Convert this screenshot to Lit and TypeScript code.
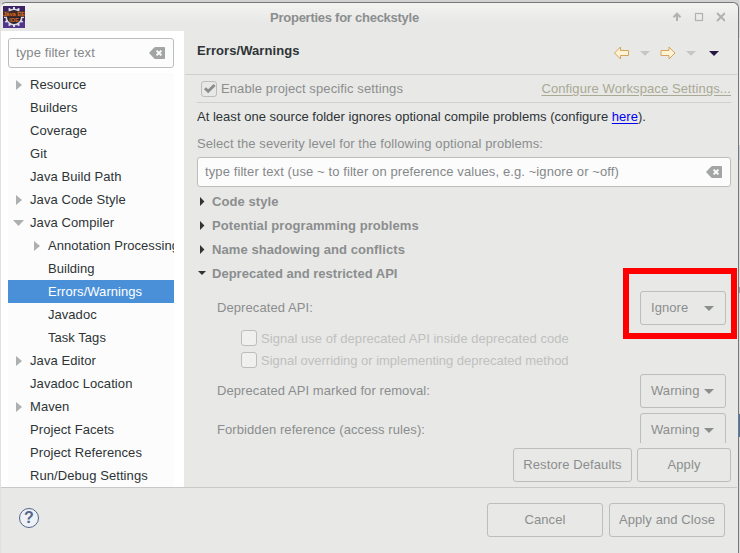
import { LitElement, html, css, svg } from "lit";
import { customElement } from "lit/decorators.js";
import { classMap } from "lit/directives/class-map.js";

type Node = { label: string; depth?: number; state?: "open" | "closed"; selected?: boolean };

const TREE: Node[] = [
  { label: "Resource", state: "closed" },
  { label: "Builders" },
  { label: "Coverage" },
  { label: "Git" },
  { label: "Java Build Path" },
  { label: "Java Code Style", state: "closed" },
  { label: "Java Compiler", state: "open" },
  { label: "Annotation Processing", depth: 1, state: "closed" },
  { label: "Building", depth: 1 },
  { label: "Errors/Warnings", depth: 1, selected: true },
  { label: "Javadoc", depth: 1 },
  { label: "Task Tags", depth: 1 },
  { label: "Java Editor", state: "closed" },
  { label: "Javadoc Location" },
  { label: "Maven", state: "closed" },
  { label: "Project Facets" },
  { label: "Project References" },
  { label: "Run/Debug Settings" },
];

const SECTIONS = ["Code style", "Potential programming problems", "Name shadowing and conflicts"];

const clearIcon = html`<svg class="clear" width="16" height="12" viewBox="0 0 16 12">
  <path d="M0 6 5.2 0.6Q5.8 0 6.6 0H15.2Q16 0 16 .8V11.2Q16 12 15.2 12H6.6Q5.8 12 5.2 11.4Z" fill="#a3a5a5"/>
  <path d="M7.6 3.6 12.4 8.4M12.4 3.6 7.6 8.4" stroke="#fcfcfc" stroke-width="2"/>
</svg>`;

const dropIcon = html`<svg class="drop" width="10" height="5" viewBox="0 0 10 5"><path d="M0 0H10L5 5Z" fill="#8b8e8f"/></svg>`;

const teeth = Array.from({ length: 12 }, (_, i) => svg`<rect x="10" y="1" width="2" height="3" fill="#dcdce4" transform=${`rotate(${i * 30} 11 11)`}/>`);

@customElement("app-root")
export class AppRoot extends LitElement {
  static styles = css`
    :host { display: block; width: 740px; height: 553px; position: relative; overflow: hidden; background: #d2d2d2;
      font: 13px/17px "Liberation Sans", Arial, sans-serif; letter-spacing: .08px; color: #2e3436; white-space: nowrap; }
    * { box-sizing: border-box; }
    svg { display: block; flex: none; }
    .behind { position: absolute; left: 739px; top: 0; width: 1px; height: 553px; background: #dcdcdc; }
    .behind i { position: absolute; left: 0; width: 1px; }
    .i1 { top: 38px; height: 107px; background: #ececec; }
    .i2 { top: 145px; height: 15px; background: #c5d0dc; }
    .i3 { top: 287px; height: 6px; background: #999; }
    .i4 { top: 414px; height: 23px; background: #4079b0; }
    .window { width: 739px; height: 551px; position: relative; top: 2px; display: flex; flex-direction: column;
      background: #e8e8e6; border: 1px solid #777; border-left-color: #e0e0df; border-bottom: 0; border-radius: 6px 6px 0 0; }
    .title { height: 28px; flex: none; display: flex; align-items: center; padding: 0 13px 0 2px; border-radius: 6px 6px 0 0;
      background: linear-gradient(#f3f3f2, #e8e8e6 20px); }
    .title h1 { margin: 0; flex: 1; text-align: center; font-size: 13px; line-height: 17px; color: #8b8e8f; letter-spacing: -.26px; padding-right: 10px; }
    .controls { margin-left: -5px; }
    .body { display: flex; height: 456px; flex: none; }
    .side { width: 183px; flex: none; background: #fff; padding: 7px 10px 0 7px; }
    .field { display: flex; flex: none; align-items: center; justify-content: space-between; height: 30px; border: 1px solid #bcbebc; border-radius: 3px;
      background: #fcfcfc; padding: 0 8px 0 7px; color: #85888a; letter-spacing: .1px; }
    .field span { padding-bottom: 1px; }
    .tree { margin-top: 5px; width: 166px; overflow: hidden; background: #fcfcfc; }
    .row { height: 23px; display: flex; align-items: center; padding-left: 5px; }
    .row.child { padding-left: 23px; letter-spacing: .04px; }
    .row.sel { background: #4a90d9; color: #fff; }
    .twist { width: 17px; flex: none; display: flex; justify-content: flex-start; }
    .main { flex: 1; display: flex; flex-direction: column; min-width: 0; padding-left: 1px; }
    .head { height: 44px; flex: none; display: flex; justify-content: space-between; border-bottom: 1px solid #d0d0ce; margin-right: 1px; padding: 11px 18px 0 12px; }
    b { font-weight: bold; }
    .nav { height: 24px; }
    .page { margin: 0 7px 0 12px; width: 534px; height: 368px; flex: none; overflow: hidden; display: flex; flex-direction: column; }
    .enable { height: 28px; flex: none; display: flex; align-items: center; border-bottom: 1px solid #d0d0ce; padding-left: 4px; color: #8b8e8f; letter-spacing: .11px; }
    .cfg { margin-left: auto; color: #aaa995; text-decoration: underline; text-underline-offset: 2px; }
    .note { height: 28px; flex: none; line-height: 28px; letter-spacing: .02px; }
    .here { color: #0000ee; text-decoration: underline; text-underline-offset: 2px; }
    .select { height: 26px; flex: none; line-height: 26px; color: #8b8e8f; }
    .sec { height: 24px; flex: none; display: flex; align-items: center; color: #8b8e8f; font-weight: bold; letter-spacing: .08px; }
    .sec.open { letter-spacing: .01px; }
    .mark { width: 15px; }
    .first { height: 2px; flex: none; }
    .opt { display: flex; flex: none; justify-content: space-between; align-items: center; height: 34px; margin: 0 5px 0 20px; color: #8b8e8f; }
    .opt span { padding-bottom: 1px; }
    .combo { width: 86px; height: 34px; border: 1px solid #bcbebc; border-radius: 3px; display: flex; align-items: center; justify-content: space-between; padding: 0 11px 0 10px; }
    .opt1 { margin-top: 6px; }
    .opt2 { margin-top: 3px; }
    .opt3 { margin-top: 5px; }
    .checks { margin: 2px 0 0 44px; flex: none; letter-spacing: .04px; }
    .check { height: 22px; display: flex; align-items: center; color: #bfc0bf; }
    .check + .check { letter-spacing: -.02px; }
    .box { width: 16px; height: 16px; flex: none; border: 1px solid #bcbebc; border-radius: 3px; background: #f0f0ef; margin-right: 4px; }
    .box.on { background: none; }
    .actions, .foot { display: flex; color: #8b8e8f; letter-spacing: .1px; }
    .actions { justify-content: flex-end; gap: 5px; padding: 5px 7px 0 0; height: 44px; }
    .btn { height: 34px; border: 1px solid #bcbebc; border-radius: 3px; display: flex; align-items: center; justify-content: center; padding-bottom: 2px; }
    .restore { width: 119px; } .apply { width: 94px; } .wide { width: 116px; }
    .foot { border-top: 1px solid #c8c9c7; margin-right: 1px; height: 66px; gap: 6px; padding: 15px 12px 0 18px; align-items: flex-start; }
    .help { margin: 5px auto 0 0; width: 20px; height: 20px; border: 1px solid #53658a; border-radius: 50%; text-align: center;
      color: #53658a; font-weight: bold; font-size: 16px; line-height: 18px; letter-spacing: 0; background: #eef1f6; }
    .callout { position: absolute; left: 623px; top: 268px; width: 114px; height: 71px; border: 6px solid #f00; }
    .logotext { font: bold 6px "Liberation Sans", sans-serif; letter-spacing: 0; fill: #dc6b1c; }
  `;

  private twist(state?: string) {
    if (state === "closed") return html`<svg width="9" height="10" viewBox="0 0 9 10"><path d="M3 0V10L9 5Z" fill="#adb0b0"/></svg>`;
    if (state === "open") return html`<svg width="11" height="6" viewBox="0 0 11 6"><path d="M0 0H11L5.5 6Z" fill="#adb0b0"/></svg>`;
    return "";
  }

  private check(label: string) {
    return html`<div class="check"><span class="box"></span>${label}</div>`;
  }

  private option(label: string, value: string, cls: string) {
    return html`<div class="opt ${cls}"><span>${label}</span><div class="combo"><span>${value}</span>${dropIcon}</div></div>`;
  }

  render() {
    return html`
      <div class="behind"><i class="i1"></i><i class="i2"></i><i class="i3"></i><i class="i4"></i></div>
      <div class="window">
        <div class="title">
          <svg width="22" height="22" viewBox="0 0 22 22">
            <rect width="22" height="22" fill="#3c2464"/><rect y="15" width="22" height="7" fill="#51358c"/>
            <circle cx="11" cy="11" r="7.8" fill="#292333" stroke="#d6d6de" stroke-width="1.6"/>${teeth}
            <rect x="0" y="5" width="22" height="6" fill="#49281f" opacity=".8"/>
            <text class="logotext" x="0" y="10.3" textLength="22" lengthAdjust="spacingAndGlyphs">Java EE</text>
            <text class="logotext" x="6" y="16" textLength="10" lengthAdjust="spacingAndGlyphs">IDE</text>
          </svg>
          <h1>Properties for checkstyle</h1>
          <svg class="controls" width="56" height="12" viewBox="0 0 56 12" fill="none" stroke="#b0b2b1">
            <path d="M8 10V4" stroke-width="2"/><path d="M4.5 6.2 8 2.7 11.5 6.2" stroke-width="2"/>
            <rect x="26.5" y="2.5" width="7" height="7" stroke-width="1.2"/>
            <path d="M48 2 56 10M56 2 48 10" stroke-width="2"/>
          </svg>
        </div>
        <div class="body">
          <div class="side">
            <div class="field"><span>type filter text</span>${clearIcon}</div>
            <div class="tree">
              ${TREE.map((n) => html`<div class=${classMap({ row: true, child: !!n.depth, sel: !!n.selected })}>
                <span class="twist">${this.twist(n.state)}</span><span>${n.label}</span></div>`)}
            </div>
          </div>
          <div class="main">
            <div class="head">
              <b>Errors/Warnings</b>
              <svg class="nav" width="106" height="24" viewBox="0 0 106 24">
                <g fill="#fff3d4" stroke="#cfa560" stroke-width="1">
                  <path d="M1.5 11 7.5 5V8.5H15.5V13.5H7.5V17Z"/>
                  <path d="M62 11 56 5V8.5H48V13.5H56V17Z"/>
                </g>
                <path d="M27 9H37L32 13.7ZM73 9H83L78 13.7Z" fill="#c5c6c5"/>
                <path d="M96 9H106L101 14Z" fill="#281642"/>
              </svg>
            </div>
            <div class="page">
              <div class="enable">
                <span class="box on"><svg width="14" height="14" viewBox="0 0 14 14"><path d="M3 6.2 6.2 9.3 12.6 3" fill="none" stroke="#8b8e8f" stroke-width="2.9"/></svg></span>
                <span>Enable project specific settings</span>
                <span class="cfg">Configure Workspace Settings...</span>
              </div>
              <div class="note">At least one source folder ignores optional compile problems (configure <span class="here">here</span>).</div>
              <div class="select">Select the severity level for the following optional problems:</div>
              <div class="field"><span>type filter text (use ~ to filter on preference values, e.g. ~ignore or ~off)</span>${clearIcon}</div>
              <div class="first"></div>
              ${SECTIONS.map((s) => html`<div class="sec"><span class="mark"><svg width="8" height="9" viewBox="0 0 8 9"><path d="M3 0V9L7.4 4.5Z" fill="#2e3436"/></svg></span>${s}</div>`)}
              <div class="sec open"><span class="mark"><svg width="9" height="4" viewBox="0 0 9 4"><path d="M1 0H9L5 4Z" fill="#2e3436"/></svg></span>Deprecated and restricted API</div>
              ${this.option("Deprecated API:", "Ignore", "opt1")}
              <div class="checks">
                ${this.check("Signal use of deprecated API inside deprecated code")}
                ${this.check("Signal overriding or implementing deprecated method")}
              </div>
              ${this.option("Deprecated API marked for removal:", "Warning", "opt2")}
              ${this.option("Forbidden reference (access rules):", "Warning", "opt3")}
            </div>
            <div class="actions"><div class="btn restore">Restore Defaults</div><div class="btn apply">Apply</div></div>
          </div>
        </div>
        <div class="foot">
          <div class="help">?</div>
          <div class="btn wide">Cancel</div>
          <div class="btn wide">Apply and Close</div>
        </div>
      </div>
      <div class="callout"></div>
    `;
  }
}
